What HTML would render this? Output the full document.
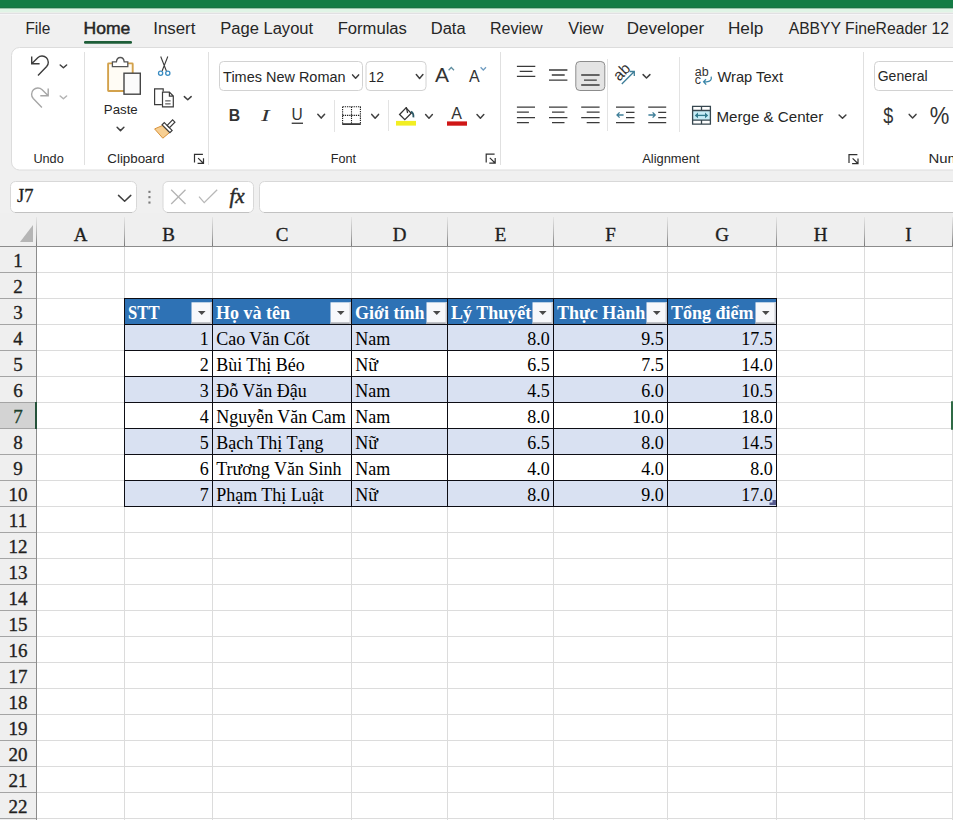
<!DOCTYPE html><html><head><meta charset="utf-8"><style>html,body{margin:0;padding:0;width:953px;height:820px;overflow:hidden;background:#f0f0f0}svg{display:block}</style></head><body><svg width="953" height="820" viewBox="0 0 953 820">
<defs><linearGradient id="sepg" x1="0" y1="0" x2="0" y2="1"><stop offset="0" stop-color="#e6e6e6"/><stop offset="0.6" stop-color="#b0b0b0"/><stop offset="1" stop-color="#7a7a7a"/></linearGradient><linearGradient id="sepr" x1="0" y1="0" x2="1" y2="0"><stop offset="0" stop-color="#e6e6e6"/><stop offset="0.6" stop-color="#b4b4b4"/><stop offset="1" stop-color="#808080"/></linearGradient></defs>
<rect x="0" y="0" width="953" height="820" fill="#f0f0f0"/>
<rect x="0" y="0" width="953" height="8.5" fill="#137c45"/>
<rect x="0" y="7.5" width="953" height="1" fill="#1d6b40"/>
<rect x="0" y="8.5" width="953" height="3.5" fill="#e0f4e6"/>
<rect x="0" y="12" width="953" height="1" fill="#eaf0ea"/>
<rect x="0" y="13" width="953" height="1" fill="#e0e0e2"/>
<rect x="0" y="14" width="953" height="1" fill="#f6f6f8"/>
<rect x="84" y="41" width="48" height="2.8" rx="1.2" fill="#1e5e38"/>
<rect x="11.5" y="47.5" width="970" height="122.5" rx="8" fill="#ffffff" stroke="#dcdcdc" stroke-width="1"/>
<line x1="84.5" y1="52" x2="84.5" y2="165" stroke="#e0e0e0" stroke-width="1"/>
<line x1="208.5" y1="52" x2="208.5" y2="165" stroke="#e0e0e0" stroke-width="1"/>
<line x1="500.5" y1="52" x2="500.5" y2="165" stroke="#e0e0e0" stroke-width="1"/>
<line x1="863.5" y1="52" x2="863.5" y2="165" stroke="#e0e0e0" stroke-width="1"/>
<line x1="334.5" y1="100" x2="334.5" y2="132" stroke="#e3e3e3" stroke-width="1"/>
<line x1="388.5" y1="100" x2="388.5" y2="131" stroke="#e3e3e3" stroke-width="1"/>
<line x1="607.5" y1="59" x2="607.5" y2="131" stroke="#e3e3e3" stroke-width="1"/>
<line x1="679.5" y1="57" x2="679.5" y2="132" stroke="#e3e3e3" stroke-width="1"/>
<rect x="0" y="213" width="953" height="607" fill="#ffffff"/>
<rect x="0" y="213" width="953" height="33" fill="#efefef"/>
<rect x="0" y="213" width="36" height="607" fill="#efefef"/>
<rect x="37" y="272" width="916" height="1" fill="#dcdcdc"/>
<rect x="0" y="272" width="36" height="1" fill="#a4a4a4"/>
<rect x="37" y="298" width="916" height="1" fill="#dcdcdc"/>
<rect x="0" y="298" width="36" height="1" fill="#a4a4a4"/>
<rect x="37" y="324" width="916" height="1" fill="#dcdcdc"/>
<rect x="0" y="324" width="36" height="1" fill="#a4a4a4"/>
<rect x="37" y="350" width="916" height="1" fill="#dcdcdc"/>
<rect x="0" y="350" width="36" height="1" fill="#a4a4a4"/>
<rect x="37" y="376" width="916" height="1" fill="#dcdcdc"/>
<rect x="0" y="376" width="36" height="1" fill="#a4a4a4"/>
<rect x="37" y="402" width="916" height="1" fill="#dcdcdc"/>
<rect x="0" y="402" width="36" height="1" fill="#a4a4a4"/>
<rect x="37" y="428" width="916" height="1" fill="#dcdcdc"/>
<rect x="0" y="428" width="36" height="1" fill="#a4a4a4"/>
<rect x="37" y="454" width="916" height="1" fill="#dcdcdc"/>
<rect x="0" y="454" width="36" height="1" fill="#a4a4a4"/>
<rect x="37" y="480" width="916" height="1" fill="#dcdcdc"/>
<rect x="0" y="480" width="36" height="1" fill="#a4a4a4"/>
<rect x="37" y="506" width="916" height="1" fill="#dcdcdc"/>
<rect x="0" y="506" width="36" height="1" fill="#a4a4a4"/>
<rect x="37" y="532" width="916" height="1" fill="#dcdcdc"/>
<rect x="0" y="532" width="36" height="1" fill="#a4a4a4"/>
<rect x="37" y="558" width="916" height="1" fill="#dcdcdc"/>
<rect x="0" y="558" width="36" height="1" fill="#a4a4a4"/>
<rect x="37" y="584" width="916" height="1" fill="#dcdcdc"/>
<rect x="0" y="584" width="36" height="1" fill="#a4a4a4"/>
<rect x="37" y="610" width="916" height="1" fill="#dcdcdc"/>
<rect x="0" y="610" width="36" height="1" fill="#a4a4a4"/>
<rect x="37" y="636" width="916" height="1" fill="#dcdcdc"/>
<rect x="0" y="636" width="36" height="1" fill="#a4a4a4"/>
<rect x="37" y="662" width="916" height="1" fill="#dcdcdc"/>
<rect x="0" y="662" width="36" height="1" fill="#a4a4a4"/>
<rect x="37" y="688" width="916" height="1" fill="#dcdcdc"/>
<rect x="0" y="688" width="36" height="1" fill="#a4a4a4"/>
<rect x="37" y="714" width="916" height="1" fill="#dcdcdc"/>
<rect x="0" y="714" width="36" height="1" fill="#a4a4a4"/>
<rect x="37" y="740" width="916" height="1" fill="#dcdcdc"/>
<rect x="0" y="740" width="36" height="1" fill="#a4a4a4"/>
<rect x="37" y="766" width="916" height="1" fill="#dcdcdc"/>
<rect x="0" y="766" width="36" height="1" fill="#a4a4a4"/>
<rect x="37" y="792" width="916" height="1" fill="#dcdcdc"/>
<rect x="0" y="792" width="36" height="1" fill="#a4a4a4"/>
<rect x="37" y="818" width="916" height="1" fill="#dcdcdc"/>
<rect x="0" y="818" width="36" height="1" fill="#a4a4a4"/>
<rect x="37" y="844" width="916" height="1" fill="#dcdcdc"/>
<rect x="0" y="844" width="36" height="1" fill="#a4a4a4"/>
<rect x="124" y="247" width="1" height="573" fill="#dcdcdc"/>
<rect x="124" y="217" width="1" height="29" fill="url(#sepg)"/>
<rect x="212" y="247" width="1" height="573" fill="#dcdcdc"/>
<rect x="212" y="217" width="1" height="29" fill="url(#sepg)"/>
<rect x="351" y="247" width="1" height="573" fill="#dcdcdc"/>
<rect x="351" y="217" width="1" height="29" fill="url(#sepg)"/>
<rect x="447" y="247" width="1" height="573" fill="#dcdcdc"/>
<rect x="447" y="217" width="1" height="29" fill="url(#sepg)"/>
<rect x="553" y="247" width="1" height="573" fill="#dcdcdc"/>
<rect x="553" y="217" width="1" height="29" fill="url(#sepg)"/>
<rect x="667" y="247" width="1" height="573" fill="#dcdcdc"/>
<rect x="667" y="217" width="1" height="29" fill="url(#sepg)"/>
<rect x="776" y="247" width="1" height="573" fill="#dcdcdc"/>
<rect x="776" y="217" width="1" height="29" fill="url(#sepg)"/>
<rect x="864" y="247" width="1" height="573" fill="#dcdcdc"/>
<rect x="864" y="217" width="1" height="29" fill="url(#sepg)"/>
<rect x="952" y="247" width="1" height="573" fill="#dcdcdc"/>
<rect x="952" y="217" width="1" height="29" fill="url(#sepg)"/>
<rect x="0" y="246" width="953" height="1" fill="#8c8c8c"/>
<rect x="36" y="246" width="1" height="574" fill="#8c8c8c"/>
<rect x="36" y="217" width="1" height="29" fill="url(#sepg)"/>
<polygon points="33,225 33,242 20,242" fill="#b5b5b5"/>
<text x="80.5" y="240.7" font-family='"Liberation Serif"' font-size="19" fill="#1f1f1f" stroke="#1f1f1f" stroke-width="0.35" text-anchor="middle">A</text>
<text x="168.5" y="240.7" font-family='"Liberation Serif"' font-size="19" fill="#1f1f1f" stroke="#1f1f1f" stroke-width="0.35" text-anchor="middle">B</text>
<text x="282.0" y="240.7" font-family='"Liberation Serif"' font-size="19" fill="#1f1f1f" stroke="#1f1f1f" stroke-width="0.35" text-anchor="middle">C</text>
<text x="399.5" y="240.7" font-family='"Liberation Serif"' font-size="19" fill="#1f1f1f" stroke="#1f1f1f" stroke-width="0.35" text-anchor="middle">D</text>
<text x="500.5" y="240.7" font-family='"Liberation Serif"' font-size="19" fill="#1f1f1f" stroke="#1f1f1f" stroke-width="0.35" text-anchor="middle">E</text>
<text x="610.5" y="240.7" font-family='"Liberation Serif"' font-size="19" fill="#1f1f1f" stroke="#1f1f1f" stroke-width="0.35" text-anchor="middle">F</text>
<text x="722.0" y="240.7" font-family='"Liberation Serif"' font-size="19" fill="#1f1f1f" stroke="#1f1f1f" stroke-width="0.35" text-anchor="middle">G</text>
<text x="820.5" y="240.7" font-family='"Liberation Serif"' font-size="19" fill="#1f1f1f" stroke="#1f1f1f" stroke-width="0.35" text-anchor="middle">H</text>
<text x="908.5" y="240.7" font-family='"Liberation Serif"' font-size="19" fill="#1f1f1f" stroke="#1f1f1f" stroke-width="0.35" text-anchor="middle">I</text>
<rect x="0" y="403" width="35" height="25" fill="#d3d3d3"/>
<rect x="35" y="402" width="2" height="27" fill="#24523a"/>
<text x="18" y="266.5" font-family='"Liberation Serif"' font-size="19" fill="#1f1f1f" stroke="#1f1f1f" stroke-width="0.35" text-anchor="middle">1</text>
<text x="18" y="292.5" font-family='"Liberation Serif"' font-size="19" fill="#1f1f1f" stroke="#1f1f1f" stroke-width="0.35" text-anchor="middle">2</text>
<text x="18" y="318.5" font-family='"Liberation Serif"' font-size="19" fill="#1f1f1f" stroke="#1f1f1f" stroke-width="0.35" text-anchor="middle">3</text>
<text x="18" y="344.5" font-family='"Liberation Serif"' font-size="19" fill="#1f1f1f" stroke="#1f1f1f" stroke-width="0.35" text-anchor="middle">4</text>
<text x="18" y="370.5" font-family='"Liberation Serif"' font-size="19" fill="#1f1f1f" stroke="#1f1f1f" stroke-width="0.35" text-anchor="middle">5</text>
<text x="18" y="396.5" font-family='"Liberation Serif"' font-size="19" fill="#1f1f1f" stroke="#1f1f1f" stroke-width="0.35" text-anchor="middle">6</text>
<text x="18" y="422.5" font-family='"Liberation Serif"' font-size="19" fill="#1c3f2c" stroke="#1c3f2c" stroke-width="0.35" text-anchor="middle">7</text>
<text x="18" y="448.5" font-family='"Liberation Serif"' font-size="19" fill="#1f1f1f" stroke="#1f1f1f" stroke-width="0.35" text-anchor="middle">8</text>
<text x="18" y="474.5" font-family='"Liberation Serif"' font-size="19" fill="#1f1f1f" stroke="#1f1f1f" stroke-width="0.35" text-anchor="middle">9</text>
<text x="18" y="500.5" font-family='"Liberation Serif"' font-size="19" fill="#1f1f1f" stroke="#1f1f1f" stroke-width="0.35" text-anchor="middle">10</text>
<text x="18" y="526.5" font-family='"Liberation Serif"' font-size="19" fill="#1f1f1f" stroke="#1f1f1f" stroke-width="0.35" text-anchor="middle">11</text>
<text x="18" y="552.5" font-family='"Liberation Serif"' font-size="19" fill="#1f1f1f" stroke="#1f1f1f" stroke-width="0.35" text-anchor="middle">12</text>
<text x="18" y="578.5" font-family='"Liberation Serif"' font-size="19" fill="#1f1f1f" stroke="#1f1f1f" stroke-width="0.35" text-anchor="middle">13</text>
<text x="18" y="604.5" font-family='"Liberation Serif"' font-size="19" fill="#1f1f1f" stroke="#1f1f1f" stroke-width="0.35" text-anchor="middle">14</text>
<text x="18" y="630.5" font-family='"Liberation Serif"' font-size="19" fill="#1f1f1f" stroke="#1f1f1f" stroke-width="0.35" text-anchor="middle">15</text>
<text x="18" y="656.5" font-family='"Liberation Serif"' font-size="19" fill="#1f1f1f" stroke="#1f1f1f" stroke-width="0.35" text-anchor="middle">16</text>
<text x="18" y="682.5" font-family='"Liberation Serif"' font-size="19" fill="#1f1f1f" stroke="#1f1f1f" stroke-width="0.35" text-anchor="middle">17</text>
<text x="18" y="708.5" font-family='"Liberation Serif"' font-size="19" fill="#1f1f1f" stroke="#1f1f1f" stroke-width="0.35" text-anchor="middle">18</text>
<text x="18" y="734.5" font-family='"Liberation Serif"' font-size="19" fill="#1f1f1f" stroke="#1f1f1f" stroke-width="0.35" text-anchor="middle">19</text>
<text x="18" y="760.5" font-family='"Liberation Serif"' font-size="19" fill="#1f1f1f" stroke="#1f1f1f" stroke-width="0.35" text-anchor="middle">20</text>
<text x="18" y="786.5" font-family='"Liberation Serif"' font-size="19" fill="#1f1f1f" stroke="#1f1f1f" stroke-width="0.35" text-anchor="middle">21</text>
<text x="18" y="812.5" font-family='"Liberation Serif"' font-size="19" fill="#1f1f1f" stroke="#1f1f1f" stroke-width="0.35" text-anchor="middle">22</text>
<rect x="124" y="298" width="653" height="26" fill="#2e72b5"/>
<rect x="124" y="324" width="653" height="26" fill="#d9e1f2"/>
<rect x="124" y="350" width="653" height="26" fill="#ffffff"/>
<rect x="124" y="376" width="653" height="26" fill="#d9e1f2"/>
<rect x="124" y="402" width="653" height="26" fill="#ffffff"/>
<rect x="124" y="428" width="653" height="26" fill="#d9e1f2"/>
<rect x="124" y="454" width="653" height="26" fill="#ffffff"/>
<rect x="124" y="480" width="653" height="26" fill="#d9e1f2"/>
<rect x="124" y="298" width="653" height="1" fill="#0d0d14"/>
<rect x="124" y="324" width="653" height="1" fill="#0d0d14"/>
<rect x="124" y="350" width="653" height="1" fill="#0d0d14"/>
<rect x="124" y="376" width="653" height="1" fill="#0d0d14"/>
<rect x="124" y="402" width="653" height="1" fill="#0d0d14"/>
<rect x="124" y="428" width="653" height="1" fill="#0d0d14"/>
<rect x="124" y="454" width="653" height="1" fill="#0d0d14"/>
<rect x="124" y="480" width="653" height="1" fill="#0d0d14"/>
<rect x="124" y="506" width="653" height="1" fill="#0d0d14"/>
<rect x="124" y="298" width="1" height="209" fill="#0d0d14"/>
<rect x="212" y="298" width="1" height="209" fill="#0d0d14"/>
<rect x="351" y="298" width="1" height="209" fill="#0d0d14"/>
<rect x="447" y="298" width="1" height="209" fill="#0d0d14"/>
<rect x="553" y="298" width="1" height="209" fill="#0d0d14"/>
<rect x="667" y="298" width="1" height="209" fill="#0d0d14"/>
<rect x="776" y="298" width="1" height="209" fill="#0d0d14"/>
<text x="128" y="319" font-family='"Liberation Serif"' font-size="18" font-weight="700" fill="#ffffff" textLength="31.5" lengthAdjust="spacingAndGlyphs">STT</text>
<rect x="191.5" y="302.3" width="20.5" height="21.7" fill="#f7f8fb"/>
<rect x="191.5" y="322.3" width="20.5" height="1.7" fill="#a9acb3"/>
<rect x="210.5" y="302.3" width="1.5" height="21.7" fill="#c9ccd3"/>
<polygon points="197.95,310.9 205.55,310.9 201.75,314.9" fill="#4a4a4a"/>
<text x="216" y="319" font-family='"Liberation Serif"' font-size="18" font-weight="700" fill="#ffffff">Họ và tên</text>
<rect x="330.5" y="302.3" width="20.5" height="21.7" fill="#f7f8fb"/>
<rect x="330.5" y="322.3" width="20.5" height="1.7" fill="#a9acb3"/>
<rect x="349.5" y="302.3" width="1.5" height="21.7" fill="#c9ccd3"/>
<polygon points="336.95,310.9 344.55,310.9 340.75,314.9" fill="#4a4a4a"/>
<text x="355" y="319" font-family='"Liberation Serif"' font-size="18" font-weight="700" fill="#ffffff">Giới tính</text>
<rect x="426.5" y="302.3" width="20.5" height="21.7" fill="#f7f8fb"/>
<rect x="426.5" y="322.3" width="20.5" height="1.7" fill="#a9acb3"/>
<rect x="445.5" y="302.3" width="1.5" height="21.7" fill="#c9ccd3"/>
<polygon points="432.95,310.9 440.55,310.9 436.75,314.9" fill="#4a4a4a"/>
<text x="451" y="319" font-family='"Liberation Serif"' font-size="18" font-weight="700" fill="#ffffff">Lý Thuyết</text>
<rect x="532.5" y="302.3" width="20.5" height="21.7" fill="#f7f8fb"/>
<rect x="532.5" y="322.3" width="20.5" height="1.7" fill="#a9acb3"/>
<rect x="551.5" y="302.3" width="1.5" height="21.7" fill="#c9ccd3"/>
<polygon points="538.95,310.9 546.55,310.9 542.75,314.9" fill="#4a4a4a"/>
<text x="557" y="319" font-family='"Liberation Serif"' font-size="18" font-weight="700" fill="#ffffff">Thực Hành</text>
<rect x="646.5" y="302.3" width="20.5" height="21.7" fill="#f7f8fb"/>
<rect x="646.5" y="322.3" width="20.5" height="1.7" fill="#a9acb3"/>
<rect x="665.5" y="302.3" width="1.5" height="21.7" fill="#c9ccd3"/>
<polygon points="652.95,310.9 660.55,310.9 656.75,314.9" fill="#4a4a4a"/>
<text x="671" y="319" font-family='"Liberation Serif"' font-size="18" font-weight="700" fill="#ffffff">Tổng điểm</text>
<rect x="755.5" y="302.3" width="20.5" height="21.7" fill="#f7f8fb"/>
<rect x="755.5" y="322.3" width="20.5" height="1.7" fill="#a9acb3"/>
<rect x="774.5" y="302.3" width="1.5" height="21.7" fill="#c9ccd3"/>
<polygon points="761.95,310.9 769.55,310.9 765.75,314.9" fill="#4a4a4a"/>
<text x="208.7" y="345.2" font-family='"Liberation Serif"' font-size="18" fill="#000" text-anchor="end">1</text>
<text x="216.2" y="345.2" font-family='"Liberation Serif"' font-size="18" fill="#000">Cao Văn Cốt</text>
<text x="355.2" y="345.2" font-family='"Liberation Serif"' font-size="18" fill="#000">Nam</text>
<text x="549.7" y="345.2" font-family='"Liberation Serif"' font-size="18" fill="#000" text-anchor="end">8.0</text>
<text x="663.7" y="345.2" font-family='"Liberation Serif"' font-size="18" fill="#000" text-anchor="end">9.5</text>
<text x="772.7" y="345.2" font-family='"Liberation Serif"' font-size="18" fill="#000" text-anchor="end">17.5</text>
<text x="208.7" y="371.2" font-family='"Liberation Serif"' font-size="18" fill="#000" text-anchor="end">2</text>
<text x="216.2" y="371.2" font-family='"Liberation Serif"' font-size="18" fill="#000">Bùi Thị Béo</text>
<text x="355.2" y="371.2" font-family='"Liberation Serif"' font-size="18" fill="#000">Nữ</text>
<text x="549.7" y="371.2" font-family='"Liberation Serif"' font-size="18" fill="#000" text-anchor="end">6.5</text>
<text x="663.7" y="371.2" font-family='"Liberation Serif"' font-size="18" fill="#000" text-anchor="end">7.5</text>
<text x="772.7" y="371.2" font-family='"Liberation Serif"' font-size="18" fill="#000" text-anchor="end">14.0</text>
<text x="208.7" y="397.2" font-family='"Liberation Serif"' font-size="18" fill="#000" text-anchor="end">3</text>
<text x="216.2" y="397.2" font-family='"Liberation Serif"' font-size="18" fill="#000">Đỗ Văn Đậu</text>
<text x="355.2" y="397.2" font-family='"Liberation Serif"' font-size="18" fill="#000">Nam</text>
<text x="549.7" y="397.2" font-family='"Liberation Serif"' font-size="18" fill="#000" text-anchor="end">4.5</text>
<text x="663.7" y="397.2" font-family='"Liberation Serif"' font-size="18" fill="#000" text-anchor="end">6.0</text>
<text x="772.7" y="397.2" font-family='"Liberation Serif"' font-size="18" fill="#000" text-anchor="end">10.5</text>
<text x="208.7" y="423.2" font-family='"Liberation Serif"' font-size="18" fill="#000" text-anchor="end">4</text>
<text x="216.2" y="423.2" font-family='"Liberation Serif"' font-size="18" fill="#000">Nguyễn Văn Cam</text>
<text x="355.2" y="423.2" font-family='"Liberation Serif"' font-size="18" fill="#000">Nam</text>
<text x="549.7" y="423.2" font-family='"Liberation Serif"' font-size="18" fill="#000" text-anchor="end">8.0</text>
<text x="663.7" y="423.2" font-family='"Liberation Serif"' font-size="18" fill="#000" text-anchor="end">10.0</text>
<text x="772.7" y="423.2" font-family='"Liberation Serif"' font-size="18" fill="#000" text-anchor="end">18.0</text>
<text x="208.7" y="449.2" font-family='"Liberation Serif"' font-size="18" fill="#000" text-anchor="end">5</text>
<text x="216.2" y="449.2" font-family='"Liberation Serif"' font-size="18" fill="#000">Bạch Thị Tạng</text>
<text x="355.2" y="449.2" font-family='"Liberation Serif"' font-size="18" fill="#000">Nữ</text>
<text x="549.7" y="449.2" font-family='"Liberation Serif"' font-size="18" fill="#000" text-anchor="end">6.5</text>
<text x="663.7" y="449.2" font-family='"Liberation Serif"' font-size="18" fill="#000" text-anchor="end">8.0</text>
<text x="772.7" y="449.2" font-family='"Liberation Serif"' font-size="18" fill="#000" text-anchor="end">14.5</text>
<text x="208.7" y="475.2" font-family='"Liberation Serif"' font-size="18" fill="#000" text-anchor="end">6</text>
<text x="216.2" y="475.2" font-family='"Liberation Serif"' font-size="18" fill="#000">Trương Văn Sinh</text>
<text x="355.2" y="475.2" font-family='"Liberation Serif"' font-size="18" fill="#000">Nam</text>
<text x="549.7" y="475.2" font-family='"Liberation Serif"' font-size="18" fill="#000" text-anchor="end">4.0</text>
<text x="663.7" y="475.2" font-family='"Liberation Serif"' font-size="18" fill="#000" text-anchor="end">4.0</text>
<text x="772.7" y="475.2" font-family='"Liberation Serif"' font-size="18" fill="#000" text-anchor="end">8.0</text>
<text x="208.7" y="501.2" font-family='"Liberation Serif"' font-size="18" fill="#000" text-anchor="end">7</text>
<text x="216.2" y="501.2" font-family='"Liberation Serif"' font-size="18" fill="#000">Phạm Thị Luật</text>
<text x="355.2" y="501.2" font-family='"Liberation Serif"' font-size="18" fill="#000">Nữ</text>
<text x="549.7" y="501.2" font-family='"Liberation Serif"' font-size="18" fill="#000" text-anchor="end">8.0</text>
<text x="663.7" y="501.2" font-family='"Liberation Serif"' font-size="18" fill="#000" text-anchor="end">9.0</text>
<text x="772.7" y="501.2" font-family='"Liberation Serif"' font-size="18" fill="#000" text-anchor="end">17.0</text>
<polygon points="772.5,500 776,500 776,505 769.5,505 769.5,502.5 772.5,502.5" fill="#565b8e"/>
<rect x="951" y="401" width="2" height="29" rx="1" fill="#2f6a45"/>
<path d="M31.7,56.4 V63.7 H39.6 M31.7,63.7 L37.75,57.65 A6.3,6.3 0 0 1 46.65,66.55 L38,75.5" fill="none" stroke="#3c3c3c" stroke-width="1.4"/>
<path d="M60.2,65 L63.4,67.8 L66.6,65" fill="none" stroke="#404040" stroke-width="1.5" stroke-linecap="round" stroke-linejoin="round"/>
<g transform="translate(79.9,32) scale(-1,1)"><path d="M31.7,56.4 V63.7 H39.6 M31.7,63.7 L37.75,57.65 A6.3,6.3 0 0 1 46.65,66.55 L38,75.5" fill="none" stroke="#a6a6a6" stroke-width="1.4"/></g>
<path d="M60.2,96 L63.4,98.8 L66.6,96" fill="none" stroke="#b4b4b4" stroke-width="1.5" stroke-linecap="round" stroke-linejoin="round"/>
<rect x="108.1" y="63.4" width="24.6" height="27.6" rx="0.5" fill="#fffcf5" stroke="#d3a24c" stroke-width="1.9"/>
<path d="M112.4,66.6 V61.9 H116.4 Q116.8,57.5 120.3,57.5 Q123.8,57.5 124.2,61.9 H127.8 V66.6 Z" fill="#ffffff" stroke="#555" stroke-width="1.3"/>
<rect x="124" y="73.2" width="16.3" height="21" fill="#fbfbfb" stroke="#454545" stroke-width="1.4"/>
<path d="M117.1,127.2 L120.5,130.6 L123.9,127.2" fill="none" stroke="#404040" stroke-width="1.5" stroke-linecap="round" stroke-linejoin="round"/>
<path d="M160.7,56.5 L166.4,71 M167.8,56.5 L162.1,71" fill="none" stroke="#3c3c3c" stroke-width="1.1"/>
<circle cx="160.6" cy="73.3" r="2.1" fill="#ffffff" stroke="#3a8cc2" stroke-width="1.3"/>
<circle cx="167.8" cy="73.3" r="2.1" fill="#ffffff" stroke="#3a8cc2" stroke-width="1.3"/>
<path d="M163.2,91.6 V88.8 H154.6 V104.6 H161.8" fill="none" stroke="#3c3c3c" stroke-width="1.2"/>
<path d="M162.5,92.2 H169.4 L173.3,96.1 V106.9 H162.5 Z M169.4,92.2 V96.1 H173.3" fill="#ffffff" stroke="#3c3c3c" stroke-width="1.2"/>
<path d="M165.2,100.9 H170.6 M165.2,103.9 H170.6" stroke="#3c3c3c" stroke-width="1"/>
<path d="M184.35,96.6 L187.75,99.8 L191.15,96.6" fill="none" stroke="#404040" stroke-width="1.5" stroke-linecap="round" stroke-linejoin="round"/>
<polygon points="162.3,125.6 169.4,132.7 162.8,138.2 154.6,128.9" fill="#f7cf93" stroke="#d8933c" stroke-width="1"/>
<polygon points="164.3,122.6 172.1,130.4 169.9,132.6 162.1,124.8" fill="#ffffff" stroke="#3a3a3a" stroke-width="1.2"/>
<polygon points="167.2,125.3 172.6,119.9 174.9,122.2 169.5,127.6" fill="#ffffff" stroke="#3a3a3a" stroke-width="1.2"/>
<path d="M194.5,162.6 V154.4 H202.9 M198.1,158.1 L203.1,163.0 M203.5,158.3 V163.4 H197.6" fill="none" stroke="#303030" stroke-width="1.2"/>
<rect x="219.5" y="61.5" width="143" height="29" rx="4" fill="#ffffff" stroke="#d2d2d2"/>
<path d="M352.6,74.9 L355.6,78.2 L358.6,74.9" fill="none" stroke="#404040" stroke-width="1.5" stroke-linecap="round" stroke-linejoin="round"/>
<rect x="366" y="61.5" width="60" height="29" rx="4" fill="#ffffff" stroke="#d2d2d2"/>
<path d="M416.30000000000007,74.6 L419.6,78.4 L422.9,74.6" fill="none" stroke="#404040" stroke-width="1.5" stroke-linecap="round" stroke-linejoin="round"/>
<text x="435" y="82.1" font-family='"Liberation Sans"' font-size="21" fill="#333">A</text>
<path d="M448.6,70.2 L451.3,67.5 L454,70.2" fill="none" stroke="#5f8ea0" stroke-width="1.3"/>
<text x="469" y="82.1" font-family='"Liberation Sans"' font-size="16" fill="#333">A</text>
<path d="M480.6,67.3 L483.3,70 L486,67.3" fill="none" stroke="#6f9cc0" stroke-width="1.3"/>
<text x="228.8" y="120.9" font-family='"Liberation Sans"' font-size="15.8" font-weight="700" fill="#333">B</text>
<text x="261" y="120.9" font-family='"Liberation Serif"' font-size="17.5" font-style="italic" textLength="8.6" lengthAdjust="spacingAndGlyphs" fill="#333">I</text>
<text x="291.4" y="120.2" font-family='"Liberation Sans"' font-size="16.5" textLength="11.2" lengthAdjust="spacingAndGlyphs" fill="#333">U</text>
<rect x="291.7" y="122.6" width="11.3" height="1.3" fill="#333"/>
<path d="M317.80000000000007,114.3 L321.20000000000005,118.1 L324.6,114.3" fill="none" stroke="#404040" stroke-width="1.5" stroke-linecap="round" stroke-linejoin="round"/>
<path d="M342.6,106.8 H360.4 V124 M342.6,106.8 V124 M351.5,106.8 V124 M342.6,115.4 H360.4" fill="none" stroke="#1e1e1e" stroke-width="1.1" stroke-dasharray="1.3,0.9"/>
<rect x="342.2" y="123.3" width="18.6" height="1.6" fill="#222"/>
<path d="M371.75,114.4 L375.15,118.2 L378.54999999999995,114.4" fill="none" stroke="#404040" stroke-width="1.5" stroke-linecap="round" stroke-linejoin="round"/>
<polygon points="399.6,114.5 406,107.9 411.2,113.3 404.8,119.7" fill="#ffffff" stroke="#333" stroke-width="1.3"/>
<path d="M406.3,107.2 L407.6,113" stroke="#333" stroke-width="1.2"/>
<path d="M411,111.6 Q413.8,112.8 413.4,117.3" fill="none" stroke="#2b5866" stroke-width="1.8"/>
<rect x="396" y="120.9" width="20" height="4.7" fill="#f2ee22"/>
<path d="M425.6,114.6 L429.0,118.2 L432.4,114.6" fill="none" stroke="#404040" stroke-width="1.5" stroke-linecap="round" stroke-linejoin="round"/>
<text x="451.3" y="119" font-family='"Liberation Sans"' font-size="16" fill="#333">A</text>
<rect x="447" y="121.4" width="20" height="4.3" fill="#cf1717"/>
<path d="M477.0,114.6 L480.4,118.2 L483.79999999999995,114.6" fill="none" stroke="#404040" stroke-width="1.5" stroke-linecap="round" stroke-linejoin="round"/>
<path d="M486.2,162.39999999999998 V154.2 H494.59999999999997 M489.8,157.89999999999998 L494.8,162.79999999999998 M495.2,158.1 V163.2 H489.3" fill="none" stroke="#303030" stroke-width="1.2"/>
<path d="M516.9,66.3 H535.3 M519.7,71.3 H532.5 M516.9,76.4 H535.3 " stroke="#3a3a3a" stroke-width="1.3" fill="none"/>
<path d="M549,70 H567.4 M551.8,75 H564.7 M549,80.1 H567.4 " stroke="#3a3a3a" stroke-width="1.3" fill="none"/>
<rect x="575.8" y="61.5" width="29" height="29" rx="4" fill="#e4e4e4" stroke="#8c8c8c" stroke-width="1"/>
<path d="M581.2,75 H599.6 M584,80.1 H596.8 M581.2,85 H599.6 " stroke="#3a3a3a" stroke-width="1.3" fill="none"/>
<g transform="translate(621.6,71.9) rotate(-45)"><text x="0" y="5.2" text-anchor="middle" font-family='"Liberation Sans"' font-size="15.5" fill="#333">ab</text></g>
<path d="M621.8,84 L634.3,71.5 M629.8,71.5 H634.3 V76" fill="none" stroke="#3f7f99" stroke-width="1.3"/>
<path d="M643.1,74.6 L646.5,78 L649.9,74.6" fill="none" stroke="#404040" stroke-width="1.5" stroke-linecap="round" stroke-linejoin="round"/>
<path d="M516.9,107.1 H535 M516.9,112.2 H528.9 M516.9,117.6 H535 M516.9,122.7 H528.9 " stroke="#3a3a3a" stroke-width="1.3" fill="none"/>
<path d="M549,107.1 H567.4 M552,112.2 H564.5 M549,117.6 H567.4 M552,122.7 H564.5 " stroke="#3a3a3a" stroke-width="1.3" fill="none"/>
<path d="M581.2,107.1 H599.6 M586.7,112.2 H599.6 M581.2,117.6 H599.6 M586.7,122.7 H599.6 " stroke="#3a3a3a" stroke-width="1.3" fill="none"/>
<path d="M616,107.1 H634.5 M626,112.4 H634.5 M626,117.6 H634.5 M616,122.7 H634.5 " stroke="#3a3a3a" stroke-width="1.3" fill="none"/>
<path d="M623.6,115 H617 M619.6,112.4 L617,115 L619.6,117.6" fill="none" stroke="#3f7f99" stroke-width="1.3"/>
<path d="M648.2,107.1 H666.2 M658.2,112.4 H666.2 M658.2,117.6 H666.2 M648.2,122.7 H666.2 " stroke="#3a3a3a" stroke-width="1.3" fill="none"/>
<path d="M648.4,115 H655.2 M652.6,112.4 L655.2,115 L652.6,117.6" fill="none" stroke="#3f7f99" stroke-width="1.3"/>
<text x="694.8" y="75.5" font-family='"Liberation Sans"' font-size="12.5" fill="#333">ab</text>
<text x="694.8" y="84.3" font-family='"Liberation Sans"' font-size="12.5" fill="#333">c</text>
<path d="M711.2,76.6 Q712.2,81.6 706.5,81.8 H703.6 M706,79.2 L703.6,81.8 L706.2,84.6" fill="none" stroke="#3a86a8" stroke-width="1.3"/>
<rect x="692.6" y="110.6" width="17.8" height="9.6" fill="#c6ecf6"/>
<path d="M692.6,106.4 H710.4 V124.2 H692.6 Z M692.6,110.5 H710.4 M692.6,120.2 H710.4 M701.5,106.4 V110.5 M701.5,120.2 V124.2" fill="none" stroke="#37474f" stroke-width="1.3"/>
<path d="M697,115.4 H706" stroke="#2f7a8c" stroke-width="1.3"/><polygon points="694.8,115.4 698,112.5 698,118.3" fill="#2f7a8c"/><polygon points="708.2,115.4 705,112.5 705,118.3" fill="#2f7a8c"/>
<path d="M839.1,115 L842.5,118.3 L845.9,115" fill="none" stroke="#404040" stroke-width="1.5" stroke-linecap="round" stroke-linejoin="round"/>
<path d="M849,162.89999999999998 V154.7 H857.4 M852.6,158.39999999999998 L857.6,163.29999999999998 M858,158.6 V163.7 H852.1" fill="none" stroke="#303030" stroke-width="1.2"/>
<rect x="874.5" y="61.5" width="100" height="29" rx="4" fill="#ffffff" stroke="#d2d2d2"/>
<g transform="translate(883.2,0) scale(0.82,1)"><text x="0" y="123.2" font-family='"Liberation Sans"' font-size="22" fill="#333">$</text></g>
<path d="M909.2,114.4 L912.6,118 L916.0,114.4" fill="none" stroke="#404040" stroke-width="1.5" stroke-linecap="round" stroke-linejoin="round"/>
<text x="929.8" y="124.4" font-family='"Liberation Sans"' font-size="23.5" textLength="19.6" lengthAdjust="spacingAndGlyphs" fill="#333">%</text>
<rect x="10.5" y="181.5" width="126" height="31" rx="5" fill="#ffffff" stroke="#d8d8d8"/>
<rect x="15" y="212" width="117" height="1" fill="#c2c2c2"/>
<text x="17" y="201.8" font-family='"Liberation Serif"' font-size="18.5" fill="#1e1e1e" stroke="#1e1e1e" stroke-width="0.3">J7</text>
<path d="M118.5,195.4 L124.65,201.2 L130.8,195.4" fill="none" stroke="#404040" stroke-width="1.5" stroke-linecap="round" stroke-linejoin="round"/>
<rect x="148.4" y="190.8" width="2.1" height="2.1" fill="#7a7a7a"/>
<rect x="148.4" y="196.1" width="2.1" height="2.1" fill="#7a7a7a"/>
<rect x="148.4" y="201.5" width="2.1" height="2.1" fill="#7a7a7a"/>
<rect x="163" y="181.5" width="90.5" height="31" rx="5" fill="#ffffff" stroke="#d8d8d8"/>
<rect x="167" y="212" width="82" height="1" fill="#c2c2c2"/>
<path d="M171.2,189.8 L185.5,204 M185.5,189.8 L171.2,204" stroke="#b4b4b4" stroke-width="1.3"/>
<path d="M199,196.6 L204.2,202.6 L217.2,189.8" fill="none" stroke="#b8b8b8" stroke-width="1.3"/>
<text x="229.5" y="202.5" font-family='"Liberation Serif"' font-size="21" font-style="italic" fill="#2a2a2a" stroke="#2a2a2a" stroke-width="0.5">fx</text>
<rect x="259.5" y="181.5" width="720" height="31" rx="5" fill="#ffffff" stroke="#d8d8d8"/>
<rect x="264" y="212" width="700" height="1" fill="#c2c2c2"/>
<text x="25.44" y="33.8" font-family='"Liberation Sans"' font-size="16" font-weight="400" fill="#262626" textLength="24.87" lengthAdjust="spacingAndGlyphs">File</text>
<text x="153.25" y="33.8" font-family='"Liberation Sans"' font-size="16" font-weight="400" fill="#262626" textLength="42.17" lengthAdjust="spacingAndGlyphs">Insert</text>
<text x="220.27" y="33.8" font-family='"Liberation Sans"' font-size="16" font-weight="400" fill="#262626" textLength="92.86" lengthAdjust="spacingAndGlyphs">Page Layout</text>
<text x="337.66" y="33.8" font-family='"Liberation Sans"' font-size="16" font-weight="400" fill="#262626" textLength="69.24" lengthAdjust="spacingAndGlyphs">Formulas</text>
<text x="430.77" y="33.8" font-family='"Liberation Sans"' font-size="16" font-weight="400" fill="#262626" textLength="34.83" lengthAdjust="spacingAndGlyphs">Data</text>
<text x="489.90" y="33.8" font-family='"Liberation Sans"' font-size="16" font-weight="400" fill="#262626" textLength="52.66" lengthAdjust="spacingAndGlyphs">Review</text>
<text x="568.30" y="33.8" font-family='"Liberation Sans"' font-size="16" font-weight="400" fill="#262626" textLength="35.24" lengthAdjust="spacingAndGlyphs">View</text>
<text x="626.84" y="33.8" font-family='"Liberation Sans"' font-size="16" font-weight="400" fill="#262626" textLength="77.25" lengthAdjust="spacingAndGlyphs">Developer</text>
<text x="727.93" y="33.8" font-family='"Liberation Sans"' font-size="16" font-weight="400" fill="#262626" textLength="35.37" lengthAdjust="spacingAndGlyphs">Help</text>
<text x="788.70" y="33.8" font-family='"Liberation Sans"' font-size="16" font-weight="400" fill="#262626" textLength="160.20" lengthAdjust="spacingAndGlyphs">ABBYY FineReader 12</text>
<text x="83.60" y="33.8" font-family='"Liberation Sans"' font-size="16" font-weight="400" fill="#262626" textLength="46.78" lengthAdjust="spacingAndGlyphs" stroke="#262626" stroke-width="0.45">Home</text>
<text x="33.40" y="162.8" font-family='"Liberation Sans"' font-size="12.3" font-weight="400" fill="#262626" textLength="30.33" lengthAdjust="spacingAndGlyphs">Undo</text>
<text x="107.30" y="162.8" font-family='"Liberation Sans"' font-size="12.3" font-weight="400" fill="#262626" textLength="57.03" lengthAdjust="spacingAndGlyphs">Clipboard</text>
<text x="330.78" y="162.8" font-family='"Liberation Sans"' font-size="12.3" font-weight="400" fill="#262626" textLength="25.13" lengthAdjust="spacingAndGlyphs">Font</text>
<text x="642.20" y="162.8" font-family='"Liberation Sans"' font-size="12.3" font-weight="400" fill="#262626" textLength="57.29" lengthAdjust="spacingAndGlyphs">Alignment</text>
<text x="928.54" y="162.8" font-family='"Liberation Sans"' font-size="12.3" font-weight="400" fill="#262626" textLength="31.51" lengthAdjust="spacingAndGlyphs">Num</text>
<text x="103.85" y="114.3" font-family='"Liberation Sans"' font-size="13.3" font-weight="400" fill="#262626" textLength="33.89" lengthAdjust="spacingAndGlyphs">Paste</text>
<text x="223.10" y="81.9" font-family='"Liberation Sans"' font-size="15.3" font-weight="400" fill="#262626" textLength="122.48" lengthAdjust="spacingAndGlyphs">Times New Roman</text>
<text x="368.60" y="82.1" font-family='"Liberation Sans"' font-size="15.3" font-weight="400" fill="#262626" textLength="15.36" lengthAdjust="spacingAndGlyphs">12</text>
<text x="717.50" y="81.9" font-family='"Liberation Sans"' font-size="15.3" font-weight="400" fill="#262626" textLength="65.48" lengthAdjust="spacingAndGlyphs">Wrap Text</text>
<text x="716.51" y="121.8" font-family='"Liberation Sans"' font-size="15.3" font-weight="400" fill="#262626" textLength="106.68" lengthAdjust="spacingAndGlyphs">Merge &amp; Center</text>
<text x="877.70" y="81.25" font-family='"Liberation Sans"' font-size="15.3" font-weight="400" fill="#262626" textLength="49.87" lengthAdjust="spacingAndGlyphs">General</text>
</svg></body></html>
